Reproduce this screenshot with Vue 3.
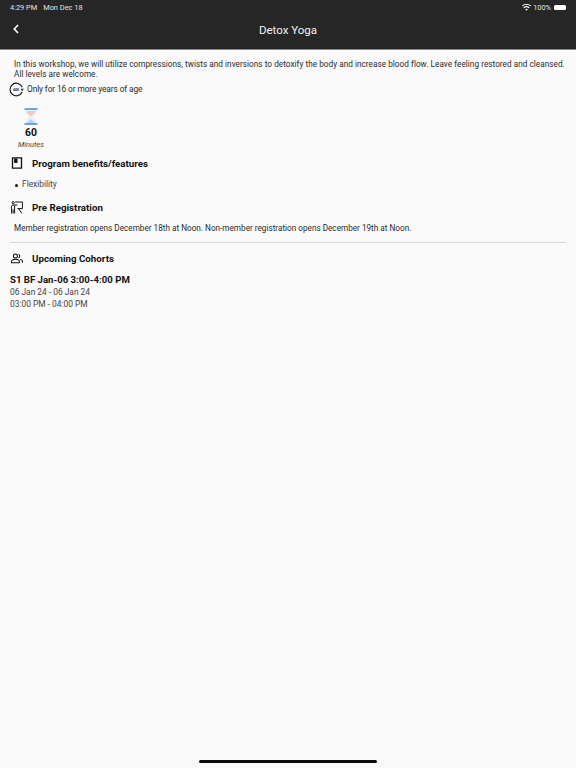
<script setup>
const cohort = { title: 'S1 BF Jan-06 3:00-4:00 PM', dates: '06 Jan 24 - 06 Jan 24', time: '03:00 PM - 04:00 PM' }
</script>

<template>
  <div class="page">
    <header class="header">
      <div class="status">
        <div class="status-left"><span>4:29 PM</span><span>Mon Dec 18</span></div>
        <div class="status-right">
          <svg width="9" height="7" viewBox="0 0 18 14"><path d="M9 13.5 6.4 10.6a3.7 3.7 0 0 1 5.2 0Z" fill="#fff"/><path d="M4.4 8.5a6.6 6.6 0 0 1 9.2 0l1.6-1.7a9 9 0 0 0-12.4 0Z" fill="#fff"/><path d="M.8 4.7a11.8 11.8 0 0 1 16.4 0L18 3.2a14 14 0 0 0-18 0Z" fill="#fff"/></svg>
          <span>100%</span>
          <span class="battery"></span>
        </div>
      </div>
      <div class="nav">
        <svg class="back" width="6" height="10" viewBox="0 0 6 10"><path d="M5 1 1.3 5 5 9" fill="none" stroke="#fff" stroke-width="1.6"/></svg>
        <h1 class="title">Detox Yoga</h1>
      </div>
    </header>

    <main class="content">
      <p class="intro">In this workshop, we will utilize compressions, twists and inversions to detoxify the body and increase blood flow. Leave feeling restored and cleansed. All levels are welcome.</p>

      <div class="age">
        <svg width="15" height="15" viewBox="0 0 15 15">
          <path d="M13.2 5.2A6.3 6.3 0 1 0 13.2 9.8" fill="none" stroke="#111" stroke-width="1.1"/>
          <path d="M11.6 6.8h3.2L13.2 9Z" fill="#111"/>
          <text x="7" y="8.6" text-anchor="middle" class="age-text">AGE</text>
        </svg>
        <span>Only for 16 or more years of age</span>
      </div>

      <div class="duration">
        <svg width="14" height="17" viewBox="0 0 14 17">
          <rect x="0.5" y="0" width="13" height="2" fill="#6ea6dc"/>
          <rect x="0.5" y="15" width="13" height="2" fill="#6ea6dc"/>
          <path d="M2 2h10v3L8.2 8.5 12 12v3H2v-3l3.8-3.5L2 5Z" fill="#e6f0fa"/>
          <path d="M2.6 3h8.8v1.8L7.8 8H6.2L2.6 4.8Z" fill="#f0cdb8"/>
          <path d="M3 15 7 11.4 11 15Z" fill="#b3d0ee"/>
        </svg>
        <strong>60</strong>
        <em>Minutes</em>
      </div>

      <section class="section-head benefits-head">
        <svg width="11" height="12" viewBox="0 0 11 12"><path d="M1 .8h9v10.4H1Z" fill="none" stroke="#111" stroke-width="1.3"/><path d="M2.6 1.5h3.4v4.4H2.6Z" fill="#111"/></svg>
        <h2>Program benefits/features</h2>
      </section>
      <ul class="list"><li>Flexibility</li></ul>

      <section class="section-head reg-head">
        <svg width="12" height="13" viewBox="0 0 12 13" fill="none" stroke="#111" stroke-width="1"><circle cx="2.2" cy="1.6" r="1.1"/><path d="M.6 12.5V5.2c0-.8.6-1.2 1.4-1.2h4.4M3.6 4.4v8.1M2.1 8.4v4.1"/><path d="M4.2 1h7.2v6.6H6.4M7.6 7.6l3.4 4.9"/></svg>
        <h2>Pre Registration</h2>
      </section>
      <p class="reg-text">Member registration opens December 18th at Noon. Non-member registration opens December 19th at Noon.</p>

      <hr class="rule" />

      <section class="section-head cohorts-head">
        <svg width="13" height="11" viewBox="0 0 13 11" fill="none" stroke="#111" stroke-width="1.1"><circle cx="4.8" cy="2.8" r="2.2"/><path d="M.6 10.2V8.6c0-1.4 1.4-2.2 4.2-2.2s4.2.8 4.2 2.2v1.6Z"/><path d="M8.2.8a2.2 2.2 0 0 1 0 4M10 6.6c1.6.3 2.4 1 2.4 2v1.6"/></svg>
        <h2>Upcoming Cohorts</h2>
      </section>

      <div class="cohort">
        <h3>{{ cohort.title }}</h3>
        <p>{{ cohort.dates }}</p>
        <p>{{ cohort.time }}</p>
      </div>
    </main>

    <div class="home-indicator"></div>
  </div>
</template>

<style>
html, body { margin: 0; background: #fafafa; }
</style>

<style scoped>
.page {
  width: 576px;
  height: 768px;
  position: relative;
  overflow: hidden;
  background: #fafafa;
  color: #2a2a2a;
  font-family: Roboto, "Liberation Sans", sans-serif;
  font-size: 8.2px;
}
.header {
  height: 50px;
  box-sizing: border-box;
  background: #262626;
  border-bottom: 1px solid #8a8a8a;
  color: #fff;
  display: flex;
  flex-direction: column;
}
.status {
  height: 14px;
  display: flex;
  justify-content: space-between;
  align-items: center;
  padding: 0 10px 0 10px;
  font-size: 7.4px;
  color: #e4e4e4;
}
.status-left { display: flex; gap: 6px; }
.status-right { display: flex; align-items: center; gap: 2px; }
.battery {
  width: 12px;
  height: 5px;
  border-radius: 1.5px;
  background: #fff;
  display: block;
  margin-left: 1px;
}
.nav {
  flex: 1;
  position: relative;
  display: flex;
  align-items: center;
  justify-content: center;
  padding-bottom: 4px;
}
.back { position: absolute; left: 13px; top: 10px; }
.title { margin: 0; font-size: 11.5px; font-weight: 400; color: #f2f2f2; }
.content { padding: 8px 10px 0; }
.intro { margin: 0 0 0 4px; padding-top: 1px; line-height: 10px; letter-spacing: 0.04px; }
.age { display: flex; align-items: center; gap: 3px; margin: 2px 0 0 -1px; height: 16px; }
.age span { font-size: 8.4px; letter-spacing: -0.12px; }
.age-text { font-size: 3.2px; font-weight: 700; fill: #111; }
.duration {
  display: flex;
  flex-direction: column;
  align-items: center;
  width: 42px;
  margin-top: 11px;
}
.duration strong { font-size: 10.4px; font-weight: 700; color: #111; margin-top: 1px; line-height: 13px; }
.duration em { font-size: 7.4px; color: #444; line-height: 10px; padding-top: 1px; }
.section-head { display: flex; align-items: center; gap: 9px; height: 14px; }
.section-head svg { flex: none; width: 12px; }
.section-head h2 { margin: 0; font-size: 9.75px; font-weight: 700; color: #111; }
.benefits-head { margin-top: 6px; padding-left: 1px; }
.list { margin: 9px 0 0; padding: 0 0 0 12px; list-style: none; line-height: 11px; color: #444; font-size: 8.4px; }
.list li { position: relative; }
.list li::before {
  content: "";
  position: absolute;
  left: -7.5px;
  top: 5px;
  width: 3px;
  height: 3px;
  border-radius: 50%;
  background: #111;
}
.reg-head { margin-top: 10px; padding-left: 1px; }
.reg-text { margin: 9px 4px 0; line-height: 11px; }
.rule { border: 0; height: 1px; background: #d8d8d8; margin: 8px 0 0; }
.cohorts-head { margin-top: 8px; padding-left: 1px; }
.cohort { margin-top: 8px; }
.cohort h3 { margin: 0; font-size: 9.6px; font-weight: 700; color: #111; line-height: 13px; }
.cohort p { margin: 0; line-height: 12px; color: #444; font-size: 8.4px; }
.home-indicator {
  position: absolute;
  left: 199px;
  bottom: 5px;
  width: 178px;
  height: 3px;
  border-radius: 2px;
  background: #0a0a0a;
}
</style>
